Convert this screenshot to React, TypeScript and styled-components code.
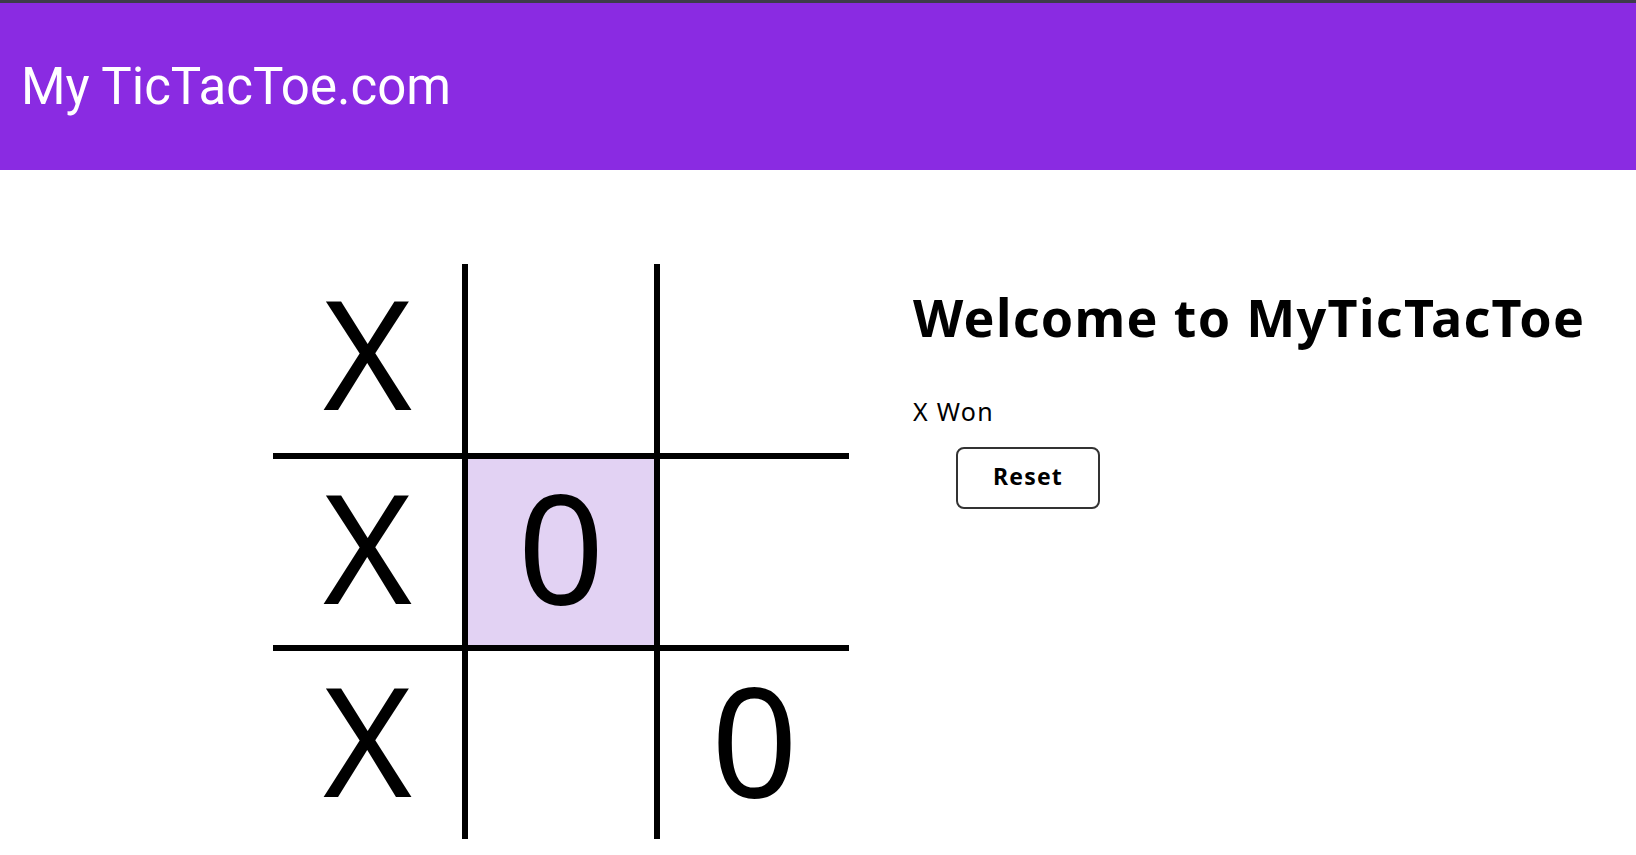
import styled, { createGlobalStyle } from 'styled-components';

type Mark = 'X' | '0' | '';

const board: Mark[] = ['X', '', '', 'X', '0', '', 'X', '', '0'];
const lastMove = 4;

const GlobalStyle = createGlobalStyle`
  html, body {
    margin: 0;
    padding: 0;
    background: #ffffff;
  }
  body {
    font-family: 'Noto Sans', 'Open Sans', sans-serif;
    color: #000;
  }
`;

function App() {
  return (
    <>
      <GlobalStyle />
      <Page>
        <TopBar>
          <Brand>My TicTacToe.com</Brand>
        </TopBar>

        <Main>
          <Board>
            {board.map((mark, i) => (
              <Cell
                key={i}
                $right={i % 3 !== 2}
                $bottom={i < 6}
                $active={i === lastMove}
              >
                {mark}
              </Cell>
            ))}
          </Board>

          <SidePanel>
            <Title>Welcome to MyTicTacToe</Title>
            <Status>X Won</Status>
            <ResetButton>Reset</ResetButton>
          </SidePanel>
        </Main>
      </Page>
    </>
  );
}

export default App;

const Page = styled.div`
  min-height: 855px;
  border-top: 3px solid #3d3c4a;
`;

const TopBar = styled.header`
  display: flex;
  align-items: center;
  height: 167px;
  padding-left: 21px;
  background-color: #8a2be2;
`;

const Brand = styled.div`
  font-family: Roboto, 'Liberation Sans', sans-serif;
  font-size: 51px;
  font-weight: 400;
  color: #ffffff;
`;

const Main = styled.main`
  display: flex;
  align-items: flex-start;
  gap: 64px;
  padding: 94px 0 0 273px;
`;

const Board = styled.div`
  display: grid;
  grid-template-columns: 195px 192px 189px;
  grid-template-rows: 195px 192px 188px;
`;

const Cell = styled.div<{ $right: boolean; $bottom: boolean; $active: boolean }>`
  display: flex;
  align-items: center;
  justify-content: center;
  padding-bottom: 13px;
  font-family: 'Noto Sans', 'Open Sans', sans-serif;
  font-size: 152px;
  line-height: 1;
  color: #000;
  background-color: ${(p) => (p.$active ? '#e2d2f3' : '#ffffff')};
  border-right: ${(p) => (p.$right ? '6px solid #000' : 'none')};
  border-bottom: ${(p) => (p.$bottom ? '6px solid #000' : 'none')};
`;

const SidePanel = styled.section`
  display: flex;
  flex-direction: column;
  align-items: flex-start;
  padding-top: 27px;
`;

const Title = styled.h1`
  margin: 0;
  font-size: 52px;
  font-weight: 700;
  line-height: 1;
  letter-spacing: 1.3px;
  white-space: nowrap;
`;

const Status = styled.p`
  margin: 56px 0 0;
  font-size: 25px;
  font-weight: 400;
  line-height: 1;
  letter-spacing: 1.3px;
`;

const ResetButton = styled.button`
  margin: 23px 0 0 43px;
  width: 144px;
  height: 62px;
  padding: 0 0 5px;
  font-family: 'Noto Sans', 'Open Sans', sans-serif;
  font-size: 23px;
  font-weight: 700;
  letter-spacing: 1.2px;
  color: #000;
  background: #ffffff;
  border: 2px solid #333;
  border-radius: 8px;
  cursor: pointer;
`;
